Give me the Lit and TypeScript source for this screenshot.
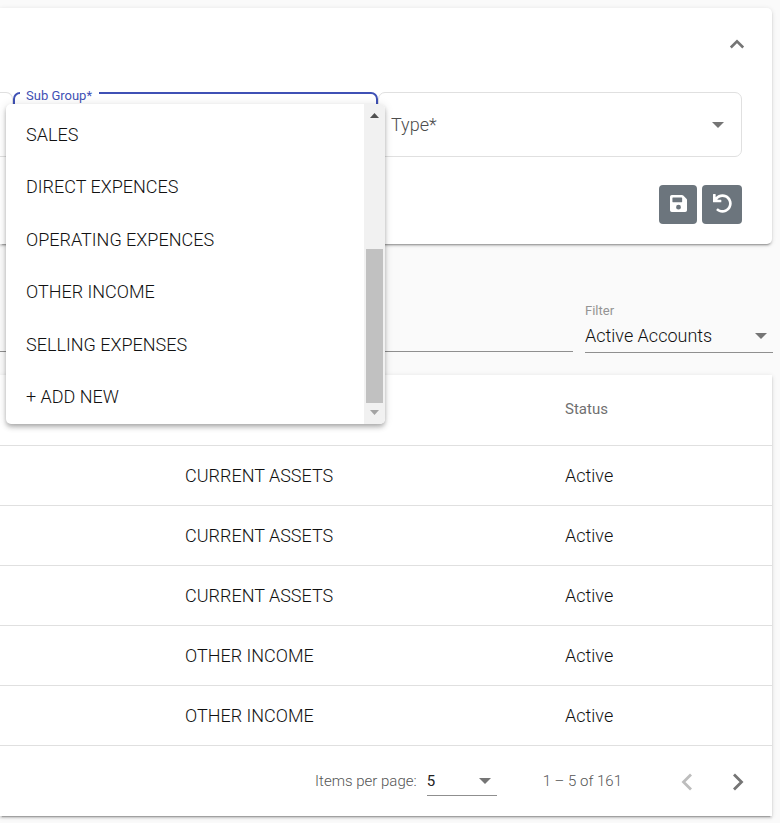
import { LitElement, html, css } from "lit";
import { customElement, property, state } from "lit/decorators.js";

const OPTIONS = [
  "SALES",
  "DIRECT EXPENCES",
  "OPERATING EXPENCES",
  "OTHER INCOME",
  "SELLING EXPENSES",
  "+ ADD NEW",
];

const ROWS = [
  { group: "CURRENT ASSETS", status: "Active" },
  { group: "CURRENT ASSETS", status: "Active" },
  { group: "CURRENT ASSETS", status: "Active" },
  { group: "OTHER INCOME", status: "Active" },
  { group: "OTHER INCOME", status: "Active" },
];

const caret = html`<svg class="caret" width="12" height="6" viewBox="0 0 12 6" aria-hidden="true">
  <path d="M0 0h12L6 6z" fill="currentColor" />
</svg>`;

const caretStyles = css`
  .caret {
    color: #757575;
    pointer-events: none;
    flex: none;
  }
  select {
    appearance: none;
    border: 0;
    outline: 0;
    padding: 0;
    margin: 0;
    background: transparent;
    font: inherit;
    color: inherit;
  }
`;

@customElement("option-panel")
export class OptionPanel extends LitElement {
  @property({ attribute: false }) options: string[] = [];

  static styles = css`
    :host {
      display: flex;
      height: 320px;
      background: #fff;
      border-radius: 5px;
      overflow: hidden;
      box-shadow: 0 2px 4px -1px rgba(0, 0, 0, 0.2), 0 4px 5px 0 rgba(0, 0, 0, 0.14),
        0 1px 10px 0 rgba(0, 0, 0, 0.12);
    }
    .list {
      flex: 1;
      display: grid;
      grid-auto-rows: 1fr;
      margin: 0;
      padding: 4px 0 1px;
      list-style: none;
    }
    .option {
      display: flex;
      align-items: center;
      padding: 0 20px;
      cursor: pointer;
    }
    .bar {
      width: 21px;
      box-sizing: border-box;
      padding: 9px 2px;
      background: #f1f1f1;
      display: flex;
      flex-direction: column;
      align-items: center;
    }
    .track {
      flex: 1;
      align-self: stretch;
      display: flex;
      flex-direction: column;
      justify-content: flex-end;
      padding: 7px 0;
    }
    .thumb {
      height: 154px;
      background: #c1c1c1;
    }
    .up {
      color: #505050;
    }
    .down {
      color: #a3a3a3;
    }
  `;

  render() {
    return html`
      <ul class="list" role="listbox" aria-label="Sub Group">
        ${this.options.map((o) => html`<li class="option" role="option">${o}</li>`)}
      </ul>
      <div class="bar" aria-hidden="true">
        <svg class="up" width="9" height="5" viewBox="0 0 9 5"><path d="M0 5h9L4.500 0z" fill="currentColor" /></svg>
        <div class="track"><div class="thumb"></div></div>
        <svg class="down" width="9" height="5" viewBox="0 0 9 5"><path d="M0 0h9L4.500 5z" fill="currentColor" /></svg>
      </div>
    `;
  }
}

@customElement("account-form")
export class AccountForm extends LitElement {
  @state() private open = true;

  static styles = [
    caretStyles,
    css`
      :host {
        display: block;
        background: #fff;
        border-radius: 0 5px 5px 0;
        padding: 20px 30px 20px 0;
        box-shadow: 0 3px 1px -2px rgba(0, 0, 0, 0.2), 0 2px 2px 0 rgba(0, 0, 0, 0.14),
          0 1px 5px 0 rgba(0, 0, 0, 0.12);
      }
      .head,
      .actions {
        display: flex;
        justify-content: flex-end;
      }
      .head {
        margin-right: -7px;
        padding-bottom: 32px;
      }
      .toggle {
        width: 24px;
        height: 32px;
        display: grid;
        place-items: center;
        padding: 0;
        border: 0;
        background: none;
        color: #757575;
      }
      .fields {
        display: grid;
        grid-template-columns: 13px 365fr 364fr;
      }
      .field {
        position: relative;
        box-sizing: border-box;
        height: 65px;
        min-width: 0;
        display: flex;
        align-items: center;
        border: 1px solid #e0e0e0;
        border-radius: 7px;
        color: #4d4d4d;
      }
      .previous {
        border-left: 0;
        border-radius: 0 7px 7px 0;
      }
      .active {
        border: 2px solid #3f51b5;
      }
      .field select {
        flex: 1;
        height: 100%;
        min-width: 0;
        padding: 0 12px;
      }
      .type .caret {
        margin-right: 17px;
      }
      .float {
        position: absolute;
        top: -6px;
        left: 5px;
        padding: 0 7px 0 6px;
        background: #fff;
        font-size: 13px;
        font-weight: 400;
        line-height: 16px;
        color: #3f51b5;
      }
      .menu {
        position: absolute;
        z-index: 2;
        top: 10px;
        left: -9px;
        right: -9px;
        color: #111;
      }
      .actions {
        gap: 5px;
        padding-top: 28px;
      }
      .action {
        width: 38px;
        height: 39px;
        display: grid;
        place-items: center;
        padding: 0 0 2px;
        border: 0;
        border-radius: 4px;
        background: #6c757d;
        color: #fff;
      }
      .reset {
        width: 40px;
      }
    `,
  ];

  render() {
    return html`
      <div class="head">
        <button class="toggle" aria-label="Collapse">
          <svg width="16" height="10" viewBox="0 0 16 10" fill="none" stroke="currentColor" stroke-width="2.600">
            <path d="M1.800 8.500 8 2.300l6.200 6.200" />
          </svg>
        </button>
      </div>
      <div class="fields">
        <div class="field previous"></div>
        <div class="field active">
          <label class="float" for="sub-group">Sub Group*</label>
          <select id="sub-group" @change=${() => (this.open = false)}></select>
          ${this.open ? html`<option-panel class="menu" .options=${OPTIONS}></option-panel>` : ""}
        </div>
        <div class="field type">
          <select aria-label="Type"><option>Type*</option></select>
          ${caret}
        </div>
      </div>
      <div class="actions">
        <button class="action" aria-label="Save">
          <svg width="17" height="17" viewBox="0 0 448 448" fill="currentColor">
            <path fill-rule="evenodd" d="M434 98 350 14A48 48 0 0 0 316 0H48A48 48 0 0 0 0 48v352a48 48 0 0 0 48 48h352a48 48 0 0 0 48-48V132a48 48 0 0 0-14-34zM224 384a64 64 0 1 1 0-128 64 64 0 0 1 0 128zm96-204a12 12 0 0 1-12 12H76a12 12 0 0 1-12-12V76a12 12 0 0 1 12-12h229l15 15z" />
          </svg>
        </button>
        <button class="action reset" aria-label="Reset">
          <svg width="19" height="19" viewBox="0 0 512 512" fill="currentColor">
            <path d="M212.300 224.300H12c-6.600 0-12-5.400-12-12V12C0 5.400 5.400 0 12 0h48c6.600 0 12 5.400 12 12v78.100C117.800 39.300 184.300 7.500 258.200 8 395 9 504.300 119.900 504 256.600 503.600 393.300 392.700 504 256 504c-64.100 0-122.500-24.300-166.500-64.200-5.100-4.600-5.300-12.600-.5-17.400l34-34c4.500-4.500 11.700-4.700 16.400-.5C170.800 415.600 211.600 432 256 432c97.300 0 176-78.700 176-176 0-97.300-78.700-176-176-176-58.500 0-110.300 28.500-142.300 72.300h98.600c6.600 0 12 5.400 12 12v48c0 6.600-5.400 12-12 12z" />
          </svg>
        </button>
      </div>
    `;
  }
}

@customElement("account-filter")
export class AccountFilter extends LitElement {
  static styles = [
    caretStyles,
    css`
      :host {
        display: flex;
        gap: 12px;
        margin-right: -1px;
      }
      .search {
        flex: 1;
        min-width: 0;
        margin-bottom: 1px;
        border: 0;
        border-bottom: 1px solid #8f8f8f;
        background: none;
        font: inherit;
        padding: 0;
        outline: 0;
      }
      .filter {
        width: 188px;
        border-bottom: 1px solid #8f8f8f;
      }
      .label {
        display: block;
        font-size: 13px;
        font-weight: 400;
        line-height: 16px;
        color: #949494;
      }
      .value {
        display: flex;
        align-items: center;
        height: 33px;
      }
      .value select {
        flex: 1;
      }
      .value .caret {
        margin-right: 6px;
      }
    `,
  ];

  render() {
    return html`
      <input class="search" type="text" aria-label="Search" />
      <div class="filter">
        <label class="label" for="filter">Filter</label>
        <div class="value">
          <select id="filter"><option>Active Accounts</option></select>
          ${caret}
        </div>
      </div>
    `;
  }
}

@customElement("account-table")
export class AccountTable extends LitElement {
  static styles = [
    caretStyles,
    css`
      :host {
        display: block;
        background: #fff;
        box-shadow: 0 3px 1px -2px rgba(0, 0, 0, 0.2), 0 2px 2px 0 rgba(0, 0, 0, 0.14),
          0 1px 5px 0 rgba(0, 0, 0, 0.12);
      }
      .table {
        width: 100%;
        table-layout: fixed;
        border-collapse: separate;
        border-spacing: 0;
      }
      .lead {
        width: 185px;
      }
      .group {
        width: 380px;
      }
      th,
      td {
        box-sizing: border-box;
        padding: 0;
        text-align: left;
        border-bottom: 1px solid #e0e0e0;
      }
      th {
        height: 71px;
        padding-bottom: 2px;
        font-size: 15px;
        font-weight: 400;
        color: #707070;
      }
      td {
        height: 60px;
      }
      .pager {
        display: flex;
        justify-content: flex-end;
        align-items: center;
        height: 70px;
        padding-right: 22px;
        font-size: 15px;
        color: #555;
      }
      .size {
        display: flex;
        align-items: center;
        width: 70px;
        height: 28px;
        margin: 0 46px 0 10px;
        border-bottom: 1px solid #8f8f8f;
        color: #222;
        font-weight: 400;
      }
      .size select {
        flex: 1;
      }
      .size .caret {
        margin-right: 6px;
      }
      .nav {
        width: 24px;
        height: 32px;
        display: grid;
        place-items: center;
        padding: 0;
        border: 0;
        background: none;
        color: #757575;
      }
      .nav:disabled {
        color: #bdbdbd;
      }
      .arrows {
        display: flex;
        gap: 27px;
        margin-left: 53px;
        padding-top: 2px;
      }
    `,
  ];

  render() {
    return html`
      <table class="table">
        <thead>
          <tr>
            <th class="lead"></th>
            <th class="group"></th>
            <th>Status</th>
          </tr>
        </thead>
        <tbody>
          ${ROWS.map(
            (r) => html`<tr>
              <td></td>
              <td>${r.group}</td>
              <td>${r.status}</td>
            </tr>`
          )}
        </tbody>
      </table>
      <div class="pager">
        <label for="page-size">Items per page:</label>
        <div class="size">
          <select id="page-size"><option>5</option></select>
          ${caret}
        </div>
        <span>1 – 5 of 161</span>
        <div class="arrows">
          <button class="nav" aria-label="Previous page" disabled>
            <svg width="12" height="18" viewBox="0 0 12 18" fill="none" stroke="currentColor" stroke-width="2.800">
              <path d="M10 1.500 2.500 9l7.500 7.500" />
            </svg>
          </button>
          <button class="nav" aria-label="Next page">
            <svg width="12" height="18" viewBox="0 0 12 18" fill="none" stroke="currentColor" stroke-width="2.800">
              <path d="M2 1.500 9.500 9 2 16.500" />
            </svg>
          </button>
        </div>
      </div>
    `;
  }
}

@customElement("app-root")
export class AppRoot extends LitElement {
  static styles = css`
    :host {
      display: block;
      box-sizing: border-box;
      min-height: 100vh;
      padding: 8px 8px 7px 0;
      background: #fafafa;
      color: #111;
      font-family: Roboto, "Liberation Sans", sans-serif;
      font-size: 18px;
      font-weight: 300;
    }
    .filter {
      margin-top: 59px;
      margin-bottom: 22px;
    }
  `;

  render() {
    return html`
      <account-form></account-form>
      <account-filter class="filter"></account-filter>
      <account-table></account-table>
    `;
  }
}
